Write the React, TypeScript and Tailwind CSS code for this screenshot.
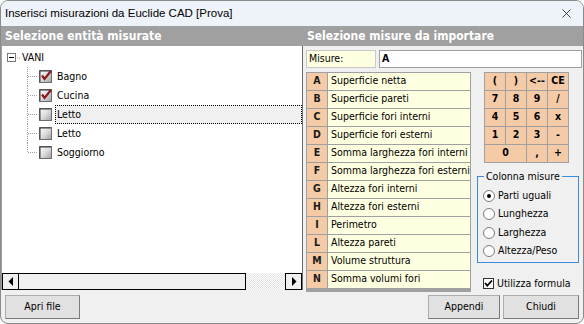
import { X } from 'lucide-react';

const ui = { fontFamily: '"DejaVu Sans Condensed", "DejaVu Sans", sans-serif' };

const misure = [
    ['A', 'Superficie netta'],
    ['B', 'Superficie pareti'],
    ['C', 'Superficie fori interni'],
    ['D', 'Superficie fori esterni'],
    ['E', 'Somma larghezza fori interni'],
    ['F', 'Somma larghezza fori esterni'],
    ['G', 'Altezza fori interni'],
    ['H', 'Altezza fori esterni'],
    ['I', 'Perimetro'],
    ['L', 'Altezza pareti'],
    ['M', 'Volume struttura'],
    ['N', 'Somma volumi fori'],
];

const vani = [
    { name: 'Bagno', checked: true },
    { name: 'Cucina', checked: true },
    { name: 'Letto', checked: false, selected: true },
    { name: 'Letto', checked: false },
    { name: 'Soggiorno', checked: false },
];

const keys = [
    ['(', ')', '<--', 'CE'],
    ['7', '8', '9', '/'],
    ['4', '5', '6', 'x'],
    ['1', '2', '3', '-'],
];

const radios = ['Parti uguali', 'Lunghezza', 'Larghezza', 'Altezza/Peso'];

function TreeCheck({ checked }: { checked: boolean }) {
    return (
        <svg width="13" height="13" viewBox="0 0 13 13">
            <defs>
                <linearGradient id="cbg" x1="0" y1="0" x2="1" y2="1">
                    <stop offset="0" stopColor="#ffffff" />
                    <stop offset="0.5" stopColor="#dcdcdc" />
                    <stop offset="1" stopColor="#a0a0a0" />
                </linearGradient>
            </defs>
            <rect x="0.5" y="0.5" width="12" height="12" fill="url(#cbg)" stroke="#6d6d6d" />
            <path d="M1 1 H12 M1 1 V12" stroke="#3a3a3a" strokeWidth="1" />
            {checked && <path d="M3 5.5 L5.5 9 L12 1" fill="none" stroke="#8b1a1a" strokeWidth="2.2" />}
        </svg>
    );
}

function Connector({ last }: { last: boolean }) {
    return (
        <svg width="12" height="19" viewBox="0 0 12 19" className="shrink-0">
            <line x1="0.5" y1="0" x2="0.5" y2={last ? 10 : 19} stroke="#a0a0a0" strokeDasharray="1 1" />
            <line x1="1" y1="9.5" x2="11" y2="9.5" stroke="#a0a0a0" strokeDasharray="1 1" />
        </svg>
    );
}

function Arrow({ dir }: { dir: 'l' | 'r' }) {
    return (
        <div className="w-[17px] h-full border border-black bg-[#f0f0f0] flex items-center justify-center">
            <svg width="6" height="9" viewBox="0 0 6 9">
                {dir === 'l' ? <path d="M5 0 V9 L0.5 4.5 Z" fill="#000" /> : <path d="M1 0 V9 L5.5 4.5 Z" fill="#000" />}
            </svg>
        </div>
    );
}

function Btn({ label, w }: { label: string; w: string }) {
    return (
        <button
            className={`${w} h-[24px] bg-[#e1e1e1] border border-[#adadad] border-r-[#7a7a7a] border-b-[#7a7a7a] text-[10.5px] text-black`}
            style={ui}
        >
            {label}
        </button>
    );
}

export default function App() {
    return (
        <div className="w-[584px] h-[324px] bg-[#f0f0f0] border border-[#8a8a8a] rounded-lg overflow-hidden flex flex-col" style={ui}>
            {/* Title bar */}
            <div className="h-[25px] bg-[#eef3f9] flex items-center justify-between pl-[4px] pr-[9px] shrink-0">
                <span className="text-[11.5px] text-black" style={{ fontFamily: '"Liberation Sans", "Noto Sans", sans-serif' }}>
                    Inserisci misurazioni da Euclide CAD [Prova]
                </span>
                <X size={15} strokeWidth={1.3} className="text-[#1a1a1a]" />
            </div>

            {/* Section headers */}
            <div className="h-[20px] bg-[#a0a0a0] flex items-center text-white font-bold text-[12px] shrink-0">
                <div className="w-[301px] pl-[4px]">Selezione entità misurate</div>
                <div className="pl-[5px]">Selezione misure da importare</div>
            </div>

            <div className="flex-1 flex min-h-0">
                {/* Left: tree */}
                <div className="w-[302px] flex flex-col border-l border-[#a0a0a0] border-r border-r-[#6d6d6d] shrink-0">
                    <div className="flex-1 bg-white pt-[2px] text-[10.5px] text-black">
                        <div className="h-[19px] flex items-center pl-[5px]">
                            <svg width="9" height="9" viewBox="0 0 9 9">
                                <rect x="0.5" y="0.5" width="8" height="8" fill="#fff" stroke="#7a7a7a" />
                                <line x1="2" y1="4.5" x2="7" y2="4.5" stroke="#000" />
                            </svg>
                            <svg width="4" height="2" className="mx-[1px]">
                                <line x1="0" y1="1" x2="4" y2="1" stroke="#a0a0a0" strokeDasharray="1 1" />
                            </svg>
                            <span>VANI</span>
                        </div>
                        {vani.map((v, i) => (
                            <div key={i} className="h-[19px] flex items-center">
                                <div className="w-[25px] shrink-0" />
                                <Connector last={i === vani.length - 1} />
                                <TreeCheck checked={v.checked} />
                                <span
                                    className={`ml-[3px] h-[19px] flex items-center pl-[1px] ${v.selected ? 'flex-1 bg-[#f0f0f0] border border-dotted border-black' : 'border border-transparent'}`}
                                >
                                    {v.name}
                                </span>
                            </div>
                        ))}
                    </div>
                    {/* Scrollbar */}
                    <div className="h-[17px] flex shrink-0">
                        <Arrow dir="l" />
                        <div className="w-[227px] h-full border border-black border-l-0 bg-[#f0f0f0]" />
                        <div className="flex-1 h-full bg-[repeating-conic-gradient(#ffffff_0_25%,#e3e3e3_0_50%)] bg-[length:2px_2px]" />
                        <Arrow dir="r" />
                    </div>
                </div>

                {/* Right: misure */}
                <div className="flex-1 flex flex-col pl-[3px] pt-[4px] text-[10.5px] text-black">
                    <div className="flex gap-[3px] h-[19px]">
                        <div className="w-[70px] bg-[#ffffe1] border border-[#c8c8c8] flex items-center pl-[2px]">Misure:</div>
                        <div className="w-[203px] bg-white border border-[#a0a0a0] flex items-center pl-[2px] font-bold">A</div>
                    </div>
                    <div className="flex mt-[4px]">
                        <div className="w-[165px] border border-[#a0a0a0] bg-[#a0a0a0] flex flex-col gap-px">
                            {misure.map(([k, t]) => (
                                <div key={k} className="h-[17px] flex gap-px">
                                    <div className="w-[20px] bg-[#f4cba6] flex items-center justify-center font-bold text-[#1a1a1a]">{k}</div>
                                    <div className="flex-1 bg-[#ffffe1] flex items-center pl-[3px] whitespace-nowrap overflow-hidden">{t}</div>
                                </div>
                            ))}
                        </div>
                        <div className="flex flex-col pl-[6px]">
                            <div className="ml-[7px] w-[85px] border border-[#a0a0a0] bg-[#a0a0a0] grid grid-cols-4 gap-px font-bold">
                                {keys.flat().map((k, i) => (
                                    <div key={i} className="h-[17px] bg-[#f4cba6] flex items-center justify-center">{k}</div>
                                ))}
                                <div className="col-span-2 h-[17px] bg-[#f4cba6] flex items-center justify-center">0</div>
                                <div className="h-[17px] bg-[#f4cba6] flex items-center justify-center">,</div>
                                <div className="h-[17px] bg-[#f4cba6] flex items-center justify-center">+</div>
                            </div>
                            <fieldset className="mt-[6px] w-[102px] h-[94px] border border-[#3c8ddc] pl-[5px] pt-[2px]">
                                <legend className="px-[2px] ml-[1px] text-[10.5px]">Colonna misure</legend>
                                <div className="flex flex-col">
                                    {radios.map((r, i) => (
                                        <div key={r} className="h-[18.5px] flex items-center gap-[3px]">
                                            <svg width="12" height="12" viewBox="0 0 12 12">
                                                <circle cx="6" cy="6" r="5.5" fill="#fff" stroke="#7a7a7a" />
                                                {i === 0 && <circle cx="6" cy="6" r="2" fill="#000" />}
                                            </svg>
                                            <span>{r}</span>
                                        </div>
                                    ))}
                                </div>
                            </fieldset>
                            <div className="mt-[13px] ml-[6px] flex items-center gap-[3px]">
                                <svg width="11" height="11" viewBox="0 0 11 11">
                                    <rect x="0.5" y="0.5" width="10" height="10" fill="#fff" stroke="#333" />
                                    <path d="M2 5 L4.3 7.6 L9 2.5" fill="none" stroke="#000" strokeWidth="1.8" />
                                </svg>
                                <span>Utilizza formula</span>
                            </div>
                        </div>
                    </div>
                </div>
            </div>

            {/* Buttons */}
            <div className="h-[33px] flex items-center pl-[4px] pr-[4px] pt-[1px] shrink-0">
                <Btn label="Apri file" w="w-[75px]" />
                <div className="flex-1" />
                <div className="flex gap-[3px]">
                    <Btn label="Appendi" w="w-[72px]" />
                    <Btn label="Chiudi" w="w-[76px]" />
                </div>
            </div>
        </div>
    );
}
